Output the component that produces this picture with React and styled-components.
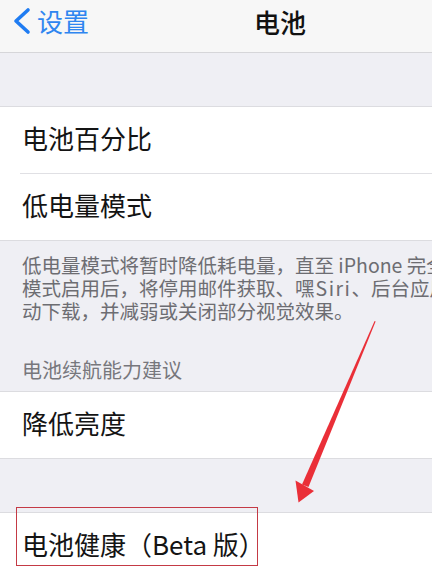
import React from 'react';
import styled, { createGlobalStyle } from 'styled-components';

const GlobalStyle = createGlobalStyle`
  html, body {
    margin: 0;
    padding: 0;
    overflow: hidden;
    background: #efeff4;
  }
  body {
    font-family: "Noto Sans CJK SC", "Noto Sans", sans-serif;
  }
`;

const Screen = styled.div`
  position: relative;
  width: 560px;
  min-height: 579px;
  background: #efeff4;
`;

const NavBar = styled.div`
  height: 52px;
  display: grid;
  grid-template-columns: 1fr auto 1fr;
  align-items: center;
  background: #f7f7f7;
  border-bottom: 1px solid #d6d6d9;
`;

const BackButton = styled.div`
  display: flex;
  align-items: center;
  gap: 5px;
  padding-left: 12px;
  color: #2f86f0;
  font-size: 26px;
  line-height: 1;
  margin-top: -10px;
`;

const Title = styled.div`
  font-size: 26px;
  font-weight: 500;
  color: #111;
  line-height: 1;
  margin-top: -9px;
`;

const Gap = styled.div`
  height: ${p => p.$h}px;
`;

const Group = styled.div`
  background: #fff;
  border-top: 1px solid #dcdce0;
  border-bottom: 1px solid #dcdce0;
`;

const Row = styled.div`
  position: relative;
  height: 61px;
  padding-bottom: 5px;
  display: flex;
  align-items: center;
  padding-left: 22px;
  font-size: 26px;
  color: #141414;
  & + & {
    border-top: 1px solid #e0e0e4;
    margin-left: 20px;
    padding-left: 2px;
  }
`;

const Footer = styled.div`
  padding: 12px 22px 0;
  font-size: 19.5px;
  line-height: 23px;
  color: #6d6d72;
`;

const Line = styled.div`
  white-space: nowrap;
`;

const Latin = styled.span`
  letter-spacing: 1.5px;
  margin-left: 1px;
`;

const SectionHeader = styled.div`
  padding: 36px 22px 10px;
  font-size: 20px;
  line-height: 23px;
  color: #77777c;
`;

const Highlight = styled.div`
  position: absolute;
  left: 16px;
  top: -6px;
  width: 242px;
  height: 59px;
  box-sizing: border-box;
  border: 1px solid #c43a45;
  pointer-events: none;
`;

const Overlay = styled.svg`
  position: absolute;
  left: 0;
  top: 0;
  pointer-events: none;
`;

function Chevron() {
  return (
    <svg width="20" height="28" viewBox="0 0 20 28">
      <polyline points="16,3 4,14 16,25" fill="none" stroke="#1f7cf2" strokeWidth="3.6" strokeLinecap="round" strokeLinejoin="round" />
    </svg>
  );
}

export default function App() {
  return (
    <Screen>
      <GlobalStyle />
      <NavBar>
        <BackButton>
          <Chevron />
          <span>设置</span>
        </BackButton>
        <Title>电池</Title>
        <div />
      </NavBar>
      <Gap $h={53} />
      <Group>
        <Row>电池百分比</Row>
        <Row>低电量模式</Row>
      </Group>
      <Footer>
        <Line>低电量模式将暂时降低耗电量，直至 iPhone 完全充电。低电量</Line>
        <Line>模式启用后，将停用邮件获取、嘿<Latin>Siri</Latin>、后台应用刷新、自</Line>
        <Line>动下载，并减弱或关闭部分视觉效果。</Line>
      </Footer>
      <SectionHeader>电池续航能力建议</SectionHeader>
      <Group>
        <Row>降低亮度</Row>
      </Group>
      <Gap $h={53} />
      <Group>
        <Row>
          电池健康（Beta 版）
          <Highlight />
        </Row>
      </Group>
      <Overlay width="560" height="579" viewBox="0 0 560 579">
        <polygon points="374.6,321 375.6,321.6 308.5,487 302,484.5" fill="#ea2f38" />
        <polygon points="295.5,480.5 314,491 298.5,502.5" fill="#ea2f38" />
      </Overlay>
    </Screen>
  );
}
